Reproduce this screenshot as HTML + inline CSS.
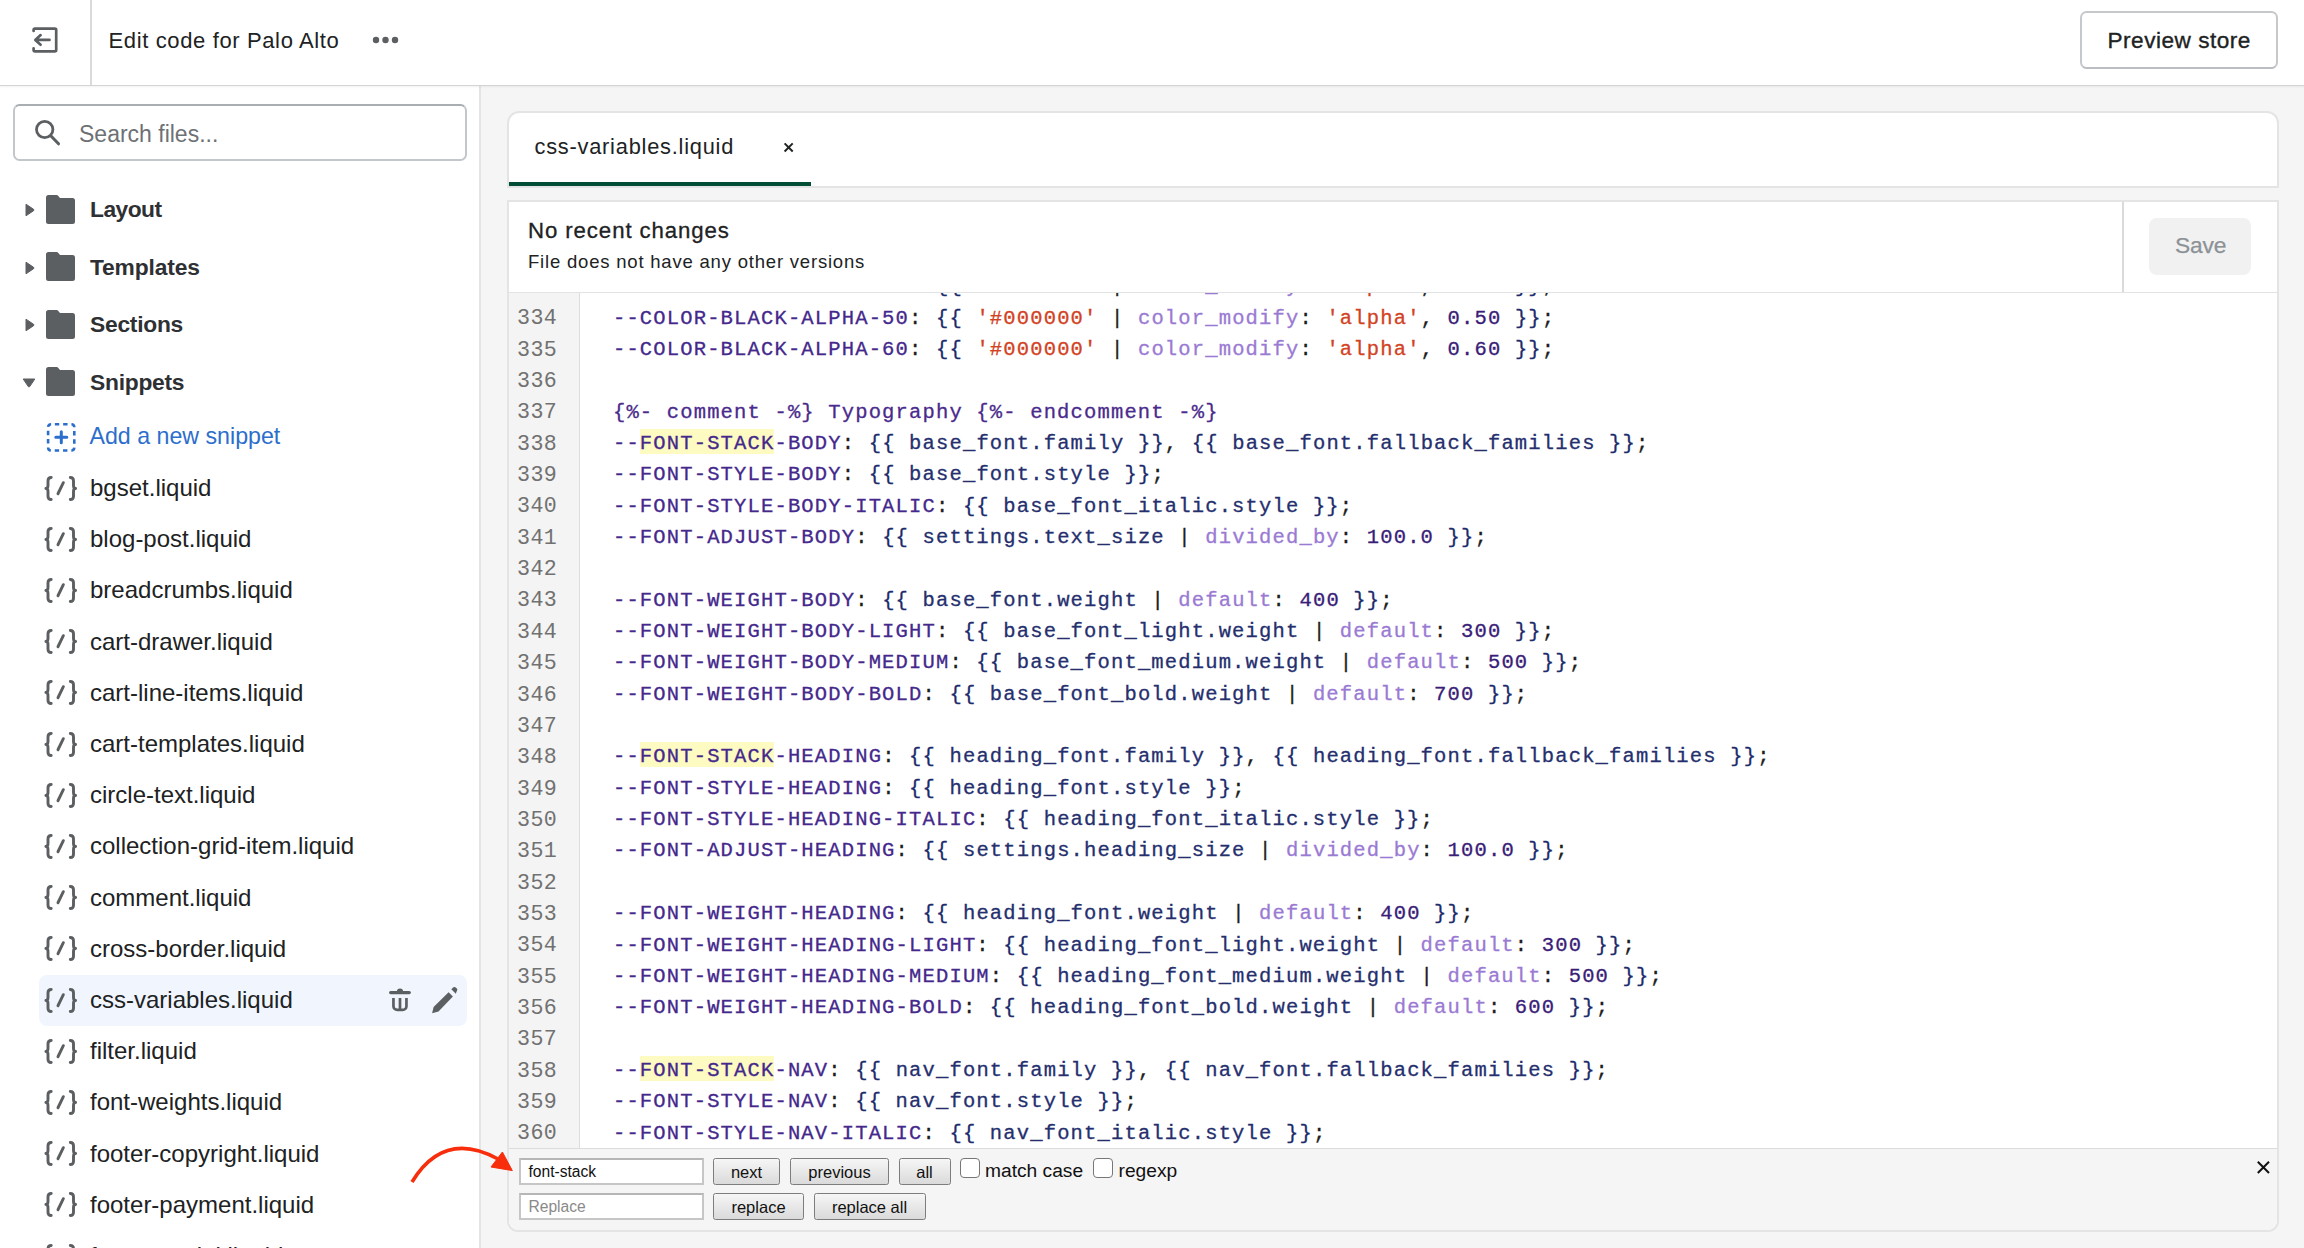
<!DOCTYPE html>
<html><head><meta charset="utf-8"><style>
*{box-sizing:border-box;margin:0;padding:0}
html,body{width:2304px;height:1248px;overflow:hidden;background:#f5f5f5;font-family:"Liberation Sans",sans-serif;color:#202223}
.abs{position:absolute}
.txt{white-space:pre;line-height:27px}
#hdr{position:absolute;left:0;top:0;width:2304px;height:86px;background:#fff;border-bottom:1.5px solid #d3d4d6;box-shadow:0 1px 2px rgba(0,0,0,0.06);z-index:2}
#side{position:absolute;left:0;top:86px;width:481px;height:1162px;background:#fff;border-right:2px solid #e3e4e5;overflow:hidden}

#main{position:absolute;left:481px;top:0;width:1823px;height:1248px}
.cl{position:absolute;left:0;height:31.35px;line-height:31.35px;white-space:pre;font-family:"Liberation Mono",monospace;font-size:20.5px;letter-spacing:1.158px;color:#1f2a6b;-webkit-text-stroke:0.3px currentColor}
.gl{position:absolute;right:22.2px;height:31.35px;line-height:31.35px;white-space:pre;font-family:"Liberation Mono",monospace;font-size:21.6px;letter-spacing:0.5px;color:#717171;text-align:right}
.tv{color:#44288c}.tvh{color:#44288c;padding-top:3.4px;background-image:linear-gradient(#fdfac2,#fdfac2);background-size:100% 25px;background-repeat:no-repeat}.tp{color:#1e1e1e}.tb{color:#1b2b6b}.ts{color:#d2421f}.tf{color:#9a7ad3}.tn{color:#3a1d78}.to{color:#252f6e}.tc{color:#4a2a8c}
.btn{position:absolute;height:27px;border:1.5px solid #7d7d7d;border-radius:2.5px;background:linear-gradient(#f6f6f6,#dadada);font-size:16.5px;line-height:27px;text-align:center;color:#111;white-space:pre}
.inp{position:absolute;height:27px;border:2px solid #c6c6c6;border-top-color:#b6b6b6;background:#fff;font-size:15.6px;line-height:23px;padding-left:7.5px;white-space:pre}
.cb{position:absolute;width:20px;height:20px;border:1.5px solid #777;border-radius:4px;background:#fff}
</style></head><body>
<div id="hdr"><svg class="abs" style="left:31px;top:26px" width="28" height="28" viewBox="0 0 28 28"><path d="M2.6 5 V4 a1.4 1.4 0 0 1 1.4 -1.4 H23.8 a1.4 1.4 0 0 1 1.4 1.4 V23.9 a1.4 1.4 0 0 1 -1.4 1.4 H4 a1.4 1.4 0 0 1 -1.4 -1.4 V22.3" fill="none" stroke="#5c5f62" stroke-width="2.7" stroke-linecap="round"/><path d="M18.5 13.9 H4.5 M9.6 9.1 L4.3 13.9 L9.6 18.7" fill="none" stroke="#5c5f62" stroke-width="2.7" stroke-linecap="round" stroke-linejoin="round"/></svg><div class="abs" style="left:90px;top:0;width:1.5px;height:85px;background:#d8dadd"></div><div class="abs txt" style="left:108.5px;top:27px;font-size:22px;letter-spacing:0.63px;color:#202223">Edit code for Palo Alto</div><svg class="abs" style="left:370px;top:33px" width="32" height="14" viewBox="0 0 32 14"><circle cx="6" cy="7" r="3.2" fill="#5c5f62"/><circle cx="15.5" cy="7" r="3.2" fill="#5c5f62"/><circle cx="25" cy="7" r="3.2" fill="#5c5f62"/></svg><div class="abs" style="left:2080px;top:11px;width:198px;height:58px;border:2px solid #c6c9cc;border-bottom-color:#babdc1;border-radius:6.5px;background:#fff"></div><div class="abs txt" style="left:2107.5px;top:26.8px;font-size:22.6px;letter-spacing:0.5px;color:#202223;-webkit-text-stroke:0.35px #202223">Preview store</div></div>
<div id="side"><div style="position:absolute;left:0;top:-86px;width:481px;height:1248px"><div class="abs" style="left:13px;top:104px;width:454px;height:57px;border:2px solid #c4c7ca;border-top-color:#a9aeb2;border-radius:6.5px;background:#fff"></div><svg class="abs" style="left:33px;top:118px" width="30" height="30" viewBox="0 0 30 30"><circle cx="11.7" cy="11.5" r="8.2" fill="none" stroke="#5c5f62" stroke-width="2.8"/><path d="M18 18 L25.5 25.8" stroke="#5c5f62" stroke-width="3" stroke-linecap="round"/></svg><div class="abs txt" style="left:79px;top:121px;font-size:23px;color:#6d7175">Search files...</div><div class="abs" style="left:25px;top:203.0px"><svg width="10" height="14" viewBox="0 0 10 14"><path d="M1 1.2 L8.6 6.3 a.9 .9 0 0 1 0 1.4 L1 12.8 Z" fill="#5c5f62" stroke="#5c5f62" stroke-width="1" stroke-linejoin="round"/></svg></div><div class="abs" style="left:46px;top:194.7px;height:29px"><svg width="29" height="29" viewBox="0 0 29 29"><path d="M2.5 0 H10.8 a1.5 1.5 0 0 1 1.1 .5 L14 3 H26.5 a2.5 2.5 0 0 1 2.5 2.5 V26.5 a2.5 2.5 0 0 1 -2.5 2.5 H2.5 a2.5 2.5 0 0 1 -2.5 -2.5 V2.5 a2.5 2.5 0 0 1 2.5 -2.5 Z" fill="#5c5f62"/></svg></div><div class="abs txt" style="left:90px;top:196.0px;font-size:22.8px;letter-spacing:-0.55px;font-weight:bold;color:#2e3033">Layout</div><div class="abs" style="left:25px;top:260.5px"><svg width="10" height="14" viewBox="0 0 10 14"><path d="M1 1.2 L8.6 6.3 a.9 .9 0 0 1 0 1.4 L1 12.8 Z" fill="#5c5f62" stroke="#5c5f62" stroke-width="1" stroke-linejoin="round"/></svg></div><div class="abs" style="left:46px;top:252.2px;height:29px"><svg width="29" height="29" viewBox="0 0 29 29"><path d="M2.5 0 H10.8 a1.5 1.5 0 0 1 1.1 .5 L14 3 H26.5 a2.5 2.5 0 0 1 2.5 2.5 V26.5 a2.5 2.5 0 0 1 -2.5 2.5 H2.5 a2.5 2.5 0 0 1 -2.5 -2.5 V2.5 a2.5 2.5 0 0 1 2.5 -2.5 Z" fill="#5c5f62"/></svg></div><div class="abs txt" style="left:90px;top:253.5px;font-size:22.8px;letter-spacing:-0.15px;font-weight:bold;color:#2e3033">Templates</div><div class="abs" style="left:25px;top:318.0px"><svg width="10" height="14" viewBox="0 0 10 14"><path d="M1 1.2 L8.6 6.3 a.9 .9 0 0 1 0 1.4 L1 12.8 Z" fill="#5c5f62" stroke="#5c5f62" stroke-width="1" stroke-linejoin="round"/></svg></div><div class="abs" style="left:46px;top:309.7px;height:29px"><svg width="29" height="29" viewBox="0 0 29 29"><path d="M2.5 0 H10.8 a1.5 1.5 0 0 1 1.1 .5 L14 3 H26.5 a2.5 2.5 0 0 1 2.5 2.5 V26.5 a2.5 2.5 0 0 1 -2.5 2.5 H2.5 a2.5 2.5 0 0 1 -2.5 -2.5 V2.5 a2.5 2.5 0 0 1 2.5 -2.5 Z" fill="#5c5f62"/></svg></div><div class="abs txt" style="left:90px;top:311.0px;font-size:22.8px;letter-spacing:-0.25px;font-weight:bold;color:#2e3033">Sections</div><div class="abs" style="left:22px;top:374.0px"><svg width="14" height="10" viewBox="0 0 14 10"><path d="M1.2 1 L12.8 1 L7.7 8.6 a.9 .9 0 0 1 -1.4 0 Z" fill="#5c5f62" stroke="#5c5f62" stroke-width="1" stroke-linejoin="round"/></svg></div><div class="abs" style="left:46px;top:367.2px;height:29px"><svg width="29" height="29" viewBox="0 0 29 29"><path d="M2.5 0 H10.8 a1.5 1.5 0 0 1 1.1 .5 L14 3 H26.5 a2.5 2.5 0 0 1 2.5 2.5 V26.5 a2.5 2.5 0 0 1 -2.5 2.5 H2.5 a2.5 2.5 0 0 1 -2.5 -2.5 V2.5 a2.5 2.5 0 0 1 2.5 -2.5 Z" fill="#5c5f62"/></svg></div><div class="abs txt" style="left:90px;top:368.5px;font-size:22.8px;letter-spacing:-0.25px;font-weight:bold;color:#2e3033">Snippets</div><div class="abs" style="left:45.5px;top:421.5px"><svg width="30" height="30" viewBox="0 0 30 30"><rect x="2.1" y="2.2" width="26.2" height="26.3" rx="3" fill="none" stroke="#2c6ecb" stroke-width="2.6" stroke-dasharray="4.4 3.9" stroke-dashoffset="4.54"/><path d="M15.3 9.7 V20.7 M9.8 15.2 H20.8" stroke="#2c6ecb" stroke-width="3" stroke-linecap="round"/></svg></div><div class="abs txt" style="left:89.5px;top:423px;font-size:23.2px;color:#2c6ecb">Add a new snippet</div><div class="abs" style="left:44px;top:475.5px"><svg width="34" height="26" viewBox="0 0 34 26"><g fill="none" stroke="#5c5f62" stroke-width="2.9" stroke-linecap="round" stroke-linejoin="round"><path d="M7.2 1.5 C5 1.5 4 2.5 4 4.8 V9.6 C4 11.3 3.3 12.5 1.9 12.5 C3.3 12.5 4 13.7 4 15.4 V20.2 C4 22.5 5 23.5 7.2 23.5"/><path d="M26.3 1.5 C28.5 1.5 29.5 2.5 29.5 4.8 V9.6 C29.5 11.3 30.2 12.5 31.6 12.5 C30.2 12.5 29.5 13.7 29.5 15.4 V20.2 C29.5 22.5 28.5 23.5 26.3 23.5"/><path d="M13.95 17.75 L19.35 6.65"/></g></svg></div><div class="abs txt" style="left:90px;top:474.0px;font-size:24px;color:#202223">bgset.liquid</div><div class="abs" style="left:44px;top:526.7px"><svg width="34" height="26" viewBox="0 0 34 26"><g fill="none" stroke="#5c5f62" stroke-width="2.9" stroke-linecap="round" stroke-linejoin="round"><path d="M7.2 1.5 C5 1.5 4 2.5 4 4.8 V9.6 C4 11.3 3.3 12.5 1.9 12.5 C3.3 12.5 4 13.7 4 15.4 V20.2 C4 22.5 5 23.5 7.2 23.5"/><path d="M26.3 1.5 C28.5 1.5 29.5 2.5 29.5 4.8 V9.6 C29.5 11.3 30.2 12.5 31.6 12.5 C30.2 12.5 29.5 13.7 29.5 15.4 V20.2 C29.5 22.5 28.5 23.5 26.3 23.5"/><path d="M13.95 17.75 L19.35 6.65"/></g></svg></div><div class="abs txt" style="left:90px;top:525.2px;font-size:24px;color:#202223">blog-post.liquid</div><div class="abs" style="left:44px;top:577.9px"><svg width="34" height="26" viewBox="0 0 34 26"><g fill="none" stroke="#5c5f62" stroke-width="2.9" stroke-linecap="round" stroke-linejoin="round"><path d="M7.2 1.5 C5 1.5 4 2.5 4 4.8 V9.6 C4 11.3 3.3 12.5 1.9 12.5 C3.3 12.5 4 13.7 4 15.4 V20.2 C4 22.5 5 23.5 7.2 23.5"/><path d="M26.3 1.5 C28.5 1.5 29.5 2.5 29.5 4.8 V9.6 C29.5 11.3 30.2 12.5 31.6 12.5 C30.2 12.5 29.5 13.7 29.5 15.4 V20.2 C29.5 22.5 28.5 23.5 26.3 23.5"/><path d="M13.95 17.75 L19.35 6.65"/></g></svg></div><div class="abs txt" style="left:90px;top:576.4px;font-size:24px;color:#202223">breadcrumbs.liquid</div><div class="abs" style="left:44px;top:629.1px"><svg width="34" height="26" viewBox="0 0 34 26"><g fill="none" stroke="#5c5f62" stroke-width="2.9" stroke-linecap="round" stroke-linejoin="round"><path d="M7.2 1.5 C5 1.5 4 2.5 4 4.8 V9.6 C4 11.3 3.3 12.5 1.9 12.5 C3.3 12.5 4 13.7 4 15.4 V20.2 C4 22.5 5 23.5 7.2 23.5"/><path d="M26.3 1.5 C28.5 1.5 29.5 2.5 29.5 4.8 V9.6 C29.5 11.3 30.2 12.5 31.6 12.5 C30.2 12.5 29.5 13.7 29.5 15.4 V20.2 C29.5 22.5 28.5 23.5 26.3 23.5"/><path d="M13.95 17.75 L19.35 6.65"/></g></svg></div><div class="abs txt" style="left:90px;top:627.6px;font-size:24px;color:#202223">cart-drawer.liquid</div><div class="abs" style="left:44px;top:680.3px"><svg width="34" height="26" viewBox="0 0 34 26"><g fill="none" stroke="#5c5f62" stroke-width="2.9" stroke-linecap="round" stroke-linejoin="round"><path d="M7.2 1.5 C5 1.5 4 2.5 4 4.8 V9.6 C4 11.3 3.3 12.5 1.9 12.5 C3.3 12.5 4 13.7 4 15.4 V20.2 C4 22.5 5 23.5 7.2 23.5"/><path d="M26.3 1.5 C28.5 1.5 29.5 2.5 29.5 4.8 V9.6 C29.5 11.3 30.2 12.5 31.6 12.5 C30.2 12.5 29.5 13.7 29.5 15.4 V20.2 C29.5 22.5 28.5 23.5 26.3 23.5"/><path d="M13.95 17.75 L19.35 6.65"/></g></svg></div><div class="abs txt" style="left:90px;top:678.8px;font-size:24px;color:#202223">cart-line-items.liquid</div><div class="abs" style="left:44px;top:731.5px"><svg width="34" height="26" viewBox="0 0 34 26"><g fill="none" stroke="#5c5f62" stroke-width="2.9" stroke-linecap="round" stroke-linejoin="round"><path d="M7.2 1.5 C5 1.5 4 2.5 4 4.8 V9.6 C4 11.3 3.3 12.5 1.9 12.5 C3.3 12.5 4 13.7 4 15.4 V20.2 C4 22.5 5 23.5 7.2 23.5"/><path d="M26.3 1.5 C28.5 1.5 29.5 2.5 29.5 4.8 V9.6 C29.5 11.3 30.2 12.5 31.6 12.5 C30.2 12.5 29.5 13.7 29.5 15.4 V20.2 C29.5 22.5 28.5 23.5 26.3 23.5"/><path d="M13.95 17.75 L19.35 6.65"/></g></svg></div><div class="abs txt" style="left:90px;top:730.0px;font-size:24px;color:#202223">cart-templates.liquid</div><div class="abs" style="left:44px;top:782.7px"><svg width="34" height="26" viewBox="0 0 34 26"><g fill="none" stroke="#5c5f62" stroke-width="2.9" stroke-linecap="round" stroke-linejoin="round"><path d="M7.2 1.5 C5 1.5 4 2.5 4 4.8 V9.6 C4 11.3 3.3 12.5 1.9 12.5 C3.3 12.5 4 13.7 4 15.4 V20.2 C4 22.5 5 23.5 7.2 23.5"/><path d="M26.3 1.5 C28.5 1.5 29.5 2.5 29.5 4.8 V9.6 C29.5 11.3 30.2 12.5 31.6 12.5 C30.2 12.5 29.5 13.7 29.5 15.4 V20.2 C29.5 22.5 28.5 23.5 26.3 23.5"/><path d="M13.95 17.75 L19.35 6.65"/></g></svg></div><div class="abs txt" style="left:90px;top:781.2px;font-size:24px;color:#202223">circle-text.liquid</div><div class="abs" style="left:44px;top:833.9px"><svg width="34" height="26" viewBox="0 0 34 26"><g fill="none" stroke="#5c5f62" stroke-width="2.9" stroke-linecap="round" stroke-linejoin="round"><path d="M7.2 1.5 C5 1.5 4 2.5 4 4.8 V9.6 C4 11.3 3.3 12.5 1.9 12.5 C3.3 12.5 4 13.7 4 15.4 V20.2 C4 22.5 5 23.5 7.2 23.5"/><path d="M26.3 1.5 C28.5 1.5 29.5 2.5 29.5 4.8 V9.6 C29.5 11.3 30.2 12.5 31.6 12.5 C30.2 12.5 29.5 13.7 29.5 15.4 V20.2 C29.5 22.5 28.5 23.5 26.3 23.5"/><path d="M13.95 17.75 L19.35 6.65"/></g></svg></div><div class="abs txt" style="left:90px;top:832.4px;font-size:24px;color:#202223">collection-grid-item.liquid</div><div class="abs" style="left:44px;top:885.1px"><svg width="34" height="26" viewBox="0 0 34 26"><g fill="none" stroke="#5c5f62" stroke-width="2.9" stroke-linecap="round" stroke-linejoin="round"><path d="M7.2 1.5 C5 1.5 4 2.5 4 4.8 V9.6 C4 11.3 3.3 12.5 1.9 12.5 C3.3 12.5 4 13.7 4 15.4 V20.2 C4 22.5 5 23.5 7.2 23.5"/><path d="M26.3 1.5 C28.5 1.5 29.5 2.5 29.5 4.8 V9.6 C29.5 11.3 30.2 12.5 31.6 12.5 C30.2 12.5 29.5 13.7 29.5 15.4 V20.2 C29.5 22.5 28.5 23.5 26.3 23.5"/><path d="M13.95 17.75 L19.35 6.65"/></g></svg></div><div class="abs txt" style="left:90px;top:883.6px;font-size:24px;color:#202223">comment.liquid</div><div class="abs" style="left:44px;top:936.3px"><svg width="34" height="26" viewBox="0 0 34 26"><g fill="none" stroke="#5c5f62" stroke-width="2.9" stroke-linecap="round" stroke-linejoin="round"><path d="M7.2 1.5 C5 1.5 4 2.5 4 4.8 V9.6 C4 11.3 3.3 12.5 1.9 12.5 C3.3 12.5 4 13.7 4 15.4 V20.2 C4 22.5 5 23.5 7.2 23.5"/><path d="M26.3 1.5 C28.5 1.5 29.5 2.5 29.5 4.8 V9.6 C29.5 11.3 30.2 12.5 31.6 12.5 C30.2 12.5 29.5 13.7 29.5 15.4 V20.2 C29.5 22.5 28.5 23.5 26.3 23.5"/><path d="M13.95 17.75 L19.35 6.65"/></g></svg></div><div class="abs txt" style="left:90px;top:934.8px;font-size:24px;color:#202223">cross-border.liquid</div><div class="abs" style="left:38.5px;top:974.9px;width:428px;height:50.7px;background:#f1f6fe;border-radius:8px"></div><svg class="abs" style="left:386px;top:985.0px" width="30" height="30" viewBox="0 0 30 30"><path d="M4.65 7.6 H23.25" stroke="#5c5f62" stroke-width="3.3" stroke-linecap="round"/><path d="M10.9 6.6 a3.1 3.1 0 0 1 6.2 0 Z" fill="#5c5f62"/><path d="M7.45 12.9 V21.2 a3.75 3.75 0 0 0 3.75 3.75 H16.7 a3.75 3.75 0 0 0 3.75 -3.75 V12.9 M14 12.9 V24" fill="none" stroke="#5c5f62" stroke-width="2.7"/></svg><svg class="abs" style="left:430px;top:985.0px" width="30" height="30" viewBox="0 0 30 30"><path d="M2.1 28.3 L3.6 21.9 L18.6 7.3 L22.9 11.6 L8.5 26.5 Z" fill="#5c5f62"/><path d="M21.3 4.2 L22.6 2.9 a2.6 2.6 0 0 1 3.7 0 l0.2 0.2 a2.6 2.6 0 0 1 0 3.7 L25.8 8.7 Z" fill="#5c5f62"/></svg><div class="abs" style="left:44px;top:987.5px"><svg width="34" height="26" viewBox="0 0 34 26"><g fill="none" stroke="#5c5f62" stroke-width="2.9" stroke-linecap="round" stroke-linejoin="round"><path d="M7.2 1.5 C5 1.5 4 2.5 4 4.8 V9.6 C4 11.3 3.3 12.5 1.9 12.5 C3.3 12.5 4 13.7 4 15.4 V20.2 C4 22.5 5 23.5 7.2 23.5"/><path d="M26.3 1.5 C28.5 1.5 29.5 2.5 29.5 4.8 V9.6 C29.5 11.3 30.2 12.5 31.6 12.5 C30.2 12.5 29.5 13.7 29.5 15.4 V20.2 C29.5 22.5 28.5 23.5 26.3 23.5"/><path d="M13.95 17.75 L19.35 6.65"/></g></svg></div><div class="abs txt" style="left:90px;top:986.0px;font-size:24px;color:#202223">css-variables.liquid</div><div class="abs" style="left:44px;top:1038.7px"><svg width="34" height="26" viewBox="0 0 34 26"><g fill="none" stroke="#5c5f62" stroke-width="2.9" stroke-linecap="round" stroke-linejoin="round"><path d="M7.2 1.5 C5 1.5 4 2.5 4 4.8 V9.6 C4 11.3 3.3 12.5 1.9 12.5 C3.3 12.5 4 13.7 4 15.4 V20.2 C4 22.5 5 23.5 7.2 23.5"/><path d="M26.3 1.5 C28.5 1.5 29.5 2.5 29.5 4.8 V9.6 C29.5 11.3 30.2 12.5 31.6 12.5 C30.2 12.5 29.5 13.7 29.5 15.4 V20.2 C29.5 22.5 28.5 23.5 26.3 23.5"/><path d="M13.95 17.75 L19.35 6.65"/></g></svg></div><div class="abs txt" style="left:90px;top:1037.2px;font-size:24px;color:#202223">filter.liquid</div><div class="abs" style="left:44px;top:1089.9px"><svg width="34" height="26" viewBox="0 0 34 26"><g fill="none" stroke="#5c5f62" stroke-width="2.9" stroke-linecap="round" stroke-linejoin="round"><path d="M7.2 1.5 C5 1.5 4 2.5 4 4.8 V9.6 C4 11.3 3.3 12.5 1.9 12.5 C3.3 12.5 4 13.7 4 15.4 V20.2 C4 22.5 5 23.5 7.2 23.5"/><path d="M26.3 1.5 C28.5 1.5 29.5 2.5 29.5 4.8 V9.6 C29.5 11.3 30.2 12.5 31.6 12.5 C30.2 12.5 29.5 13.7 29.5 15.4 V20.2 C29.5 22.5 28.5 23.5 26.3 23.5"/><path d="M13.95 17.75 L19.35 6.65"/></g></svg></div><div class="abs txt" style="left:90px;top:1088.4px;font-size:24px;color:#202223">font-weights.liquid</div><div class="abs" style="left:44px;top:1141.1px"><svg width="34" height="26" viewBox="0 0 34 26"><g fill="none" stroke="#5c5f62" stroke-width="2.9" stroke-linecap="round" stroke-linejoin="round"><path d="M7.2 1.5 C5 1.5 4 2.5 4 4.8 V9.6 C4 11.3 3.3 12.5 1.9 12.5 C3.3 12.5 4 13.7 4 15.4 V20.2 C4 22.5 5 23.5 7.2 23.5"/><path d="M26.3 1.5 C28.5 1.5 29.5 2.5 29.5 4.8 V9.6 C29.5 11.3 30.2 12.5 31.6 12.5 C30.2 12.5 29.5 13.7 29.5 15.4 V20.2 C29.5 22.5 28.5 23.5 26.3 23.5"/><path d="M13.95 17.75 L19.35 6.65"/></g></svg></div><div class="abs txt" style="left:90px;top:1139.6px;font-size:24px;color:#202223">footer-copyright.liquid</div><div class="abs" style="left:44px;top:1192.3px"><svg width="34" height="26" viewBox="0 0 34 26"><g fill="none" stroke="#5c5f62" stroke-width="2.9" stroke-linecap="round" stroke-linejoin="round"><path d="M7.2 1.5 C5 1.5 4 2.5 4 4.8 V9.6 C4 11.3 3.3 12.5 1.9 12.5 C3.3 12.5 4 13.7 4 15.4 V20.2 C4 22.5 5 23.5 7.2 23.5"/><path d="M26.3 1.5 C28.5 1.5 29.5 2.5 29.5 4.8 V9.6 C29.5 11.3 30.2 12.5 31.6 12.5 C30.2 12.5 29.5 13.7 29.5 15.4 V20.2 C29.5 22.5 28.5 23.5 26.3 23.5"/><path d="M13.95 17.75 L19.35 6.65"/></g></svg></div><div class="abs txt" style="left:90px;top:1190.8px;font-size:24px;color:#202223">footer-payment.liquid</div><div class="abs" style="left:44px;top:1243.5px"><svg width="34" height="26" viewBox="0 0 34 26"><g fill="none" stroke="#5c5f62" stroke-width="2.9" stroke-linecap="round" stroke-linejoin="round"><path d="M7.2 1.5 C5 1.5 4 2.5 4 4.8 V9.6 C4 11.3 3.3 12.5 1.9 12.5 C3.3 12.5 4 13.7 4 15.4 V20.2 C4 22.5 5 23.5 7.2 23.5"/><path d="M26.3 1.5 C28.5 1.5 29.5 2.5 29.5 4.8 V9.6 C29.5 11.3 30.2 12.5 31.6 12.5 C30.2 12.5 29.5 13.7 29.5 15.4 V20.2 C29.5 22.5 28.5 23.5 26.3 23.5"/><path d="M13.95 17.75 L19.35 6.65"/></g></svg></div><div class="abs txt" style="left:90px;top:1242.0px;font-size:24px;color:#202223">footer-social.liquid</div></div></div>
<div id="main"><div style="position:absolute;left:0;top:0;width:1823px;height:1248px"><div class="abs" style="left:26px;top:111px;width:1772px;height:77px;background:#fff;border:2px solid #e4e4e5;border-radius:12px 12px 0 0"></div><div class="abs txt" style="left:53.5px;top:133px;font-size:21.8px;letter-spacing:0.77px;color:#202223">css-variables.liquid</div><svg class="abs" style="left:300px;top:139.5px" width="14" height="14" viewBox="0 0 14 14"><path d="M3.6 3.4 L11.7 11.5 M11.7 3.4 L3.6 11.5" stroke="#202223" stroke-width="2" stroke-linecap="butt"/></svg><div class="abs" style="left:28px;top:182px;width:302px;height:4px;background:#024d36"></div><div class="abs" style="left:26px;top:200px;width:1772px;height:1032px;background:#fff;border:2px solid #e4e4e5;border-radius:0 0 11px 11px;overflow:hidden"><div class="abs" style="left:0;top:89.5px;width:1770px;height:1.5px;background:#e1e3e5"></div><div class="abs" style="left:1613px;top:0;width:1.5px;height:90px;background:#d8dadd"></div><div class="abs" style="left:1640px;top:16px;width:102px;height:57px;background:#f1f1f1;border-radius:8px"></div><div class="abs txt" style="left:1666px;top:30px;font-size:22.8px;letter-spacing:-0.2px;color:#8c9196;-webkit-text-stroke:0.25px #8c9196">Save</div><div class="abs txt" style="left:19px;top:15px;font-size:22.2px;letter-spacing:0.92px;color:#202223;-webkit-text-stroke:0.3px #202223">No recent changes</div><div class="abs txt" style="left:19px;top:46px;font-size:18.5px;letter-spacing:0.8px;color:#202223">File does not have any other versions</div></div><div class="abs" style="left:28px;top:293px;width:1768px;height:855px;overflow:hidden;background:#fff"><div class="abs" style="left:0;top:0;width:71px;height:855px;background:#f4f4f4;border-right:1.5px solid #dddddd"></div><div class="abs" style="left:0;top:0;width:70.5px;height:855px"><div class="gl" style="top:-21.03px">333</div><div class="gl" style="top:10.32px">334</div><div class="gl" style="top:41.67px">335</div><div class="gl" style="top:73.02px">336</div><div class="gl" style="top:104.37px">337</div><div class="gl" style="top:135.72px">338</div><div class="gl" style="top:167.07px">339</div><div class="gl" style="top:198.42px">340</div><div class="gl" style="top:229.78px">341</div><div class="gl" style="top:261.13px">342</div><div class="gl" style="top:292.47px">343</div><div class="gl" style="top:323.83px">344</div><div class="gl" style="top:355.18px">345</div><div class="gl" style="top:386.53px">346</div><div class="gl" style="top:417.88px">347</div><div class="gl" style="top:449.22px">348</div><div class="gl" style="top:480.58px">349</div><div class="gl" style="top:511.93px">350</div><div class="gl" style="top:543.28px">351</div><div class="gl" style="top:574.62px">352</div><div class="gl" style="top:605.97px">353</div><div class="gl" style="top:637.33px">354</div><div class="gl" style="top:668.67px">355</div><div class="gl" style="top:700.03px">356</div><div class="gl" style="top:731.38px">357</div><div class="gl" style="top:762.72px">358</div><div class="gl" style="top:794.08px">359</div><div class="gl" style="top:825.42px">360</div><div class="gl" style="top:856.78px">361</div></div><div class="abs" style="left:77px;top:0;width:1680px;height:855px"><div class="cl" style="top:-21.83px"><span class="tv">  --COLOR-BLACK-ALPHA-40</span><span class="tp">:</span> <span class="tb">{{</span> <span class="ts">'#000000'</span> <span class="tp">|</span> <span class="tf">color_modify</span><span class="tp">:</span> <span class="ts">'alpha'</span><span class="tp">,</span> <span class="tn">0.40</span> <span class="tb">}}</span><span class="tp">;</span></div><div class="cl" style="top:9.52px"><span class="tv">  --COLOR-BLACK-ALPHA-50</span><span class="tp">:</span> <span class="tb">{{</span> <span class="ts">'#000000'</span> <span class="tp">|</span> <span class="tf">color_modify</span><span class="tp">:</span> <span class="ts">'alpha'</span><span class="tp">,</span> <span class="tn">0.50</span> <span class="tb">}}</span><span class="tp">;</span></div><div class="cl" style="top:40.87px"><span class="tv">  --COLOR-BLACK-ALPHA-60</span><span class="tp">:</span> <span class="tb">{{</span> <span class="ts">'#000000'</span> <span class="tp">|</span> <span class="tf">color_modify</span><span class="tp">:</span> <span class="ts">'alpha'</span><span class="tp">,</span> <span class="tn">0.60</span> <span class="tb">}}</span><span class="tp">;</span></div><div class="cl" style="top:72.22px">&nbsp;</div><div class="cl" style="top:103.57px"><span class="tc">  {%- comment -%} Typography {%- endcomment -%}</span></div><div class="cl" style="top:134.92px"><span class="tv">  --</span><span class="tvh">FONT-STACK</span><span class="tv">-BODY</span><span class="tp">:</span> <span class="tb">{{</span> <span class="to">base_font.family</span> <span class="tb">}}</span><span class="tp">,</span> <span class="tb">{{</span> <span class="to">base_font.fallback_families</span> <span class="tb">}}</span><span class="tp">;</span></div><div class="cl" style="top:166.27px"><span class="tv">  --FONT-STYLE-BODY</span><span class="tp">:</span> <span class="tb">{{</span> <span class="to">base_font.style</span> <span class="tb">}}</span><span class="tp">;</span></div><div class="cl" style="top:197.62px"><span class="tv">  --FONT-STYLE-BODY-ITALIC</span><span class="tp">:</span> <span class="tb">{{</span> <span class="to">base_font_italic.style</span> <span class="tb">}}</span><span class="tp">;</span></div><div class="cl" style="top:228.98px"><span class="tv">  --FONT-ADJUST-BODY</span><span class="tp">:</span> <span class="tb">{{</span> <span class="to">settings.text_size</span> <span class="tp">|</span> <span class="tf">divided_by</span><span class="tp">:</span> <span class="tn">100.0</span> <span class="tb">}}</span><span class="tp">;</span></div><div class="cl" style="top:260.33px">&nbsp;</div><div class="cl" style="top:291.67px"><span class="tv">  --FONT-WEIGHT-BODY</span><span class="tp">:</span> <span class="tb">{{</span> <span class="to">base_font.weight</span> <span class="tp">|</span> <span class="tf">default</span><span class="tp">:</span> <span class="tn">400</span> <span class="tb">}}</span><span class="tp">;</span></div><div class="cl" style="top:323.03px"><span class="tv">  --FONT-WEIGHT-BODY-LIGHT</span><span class="tp">:</span> <span class="tb">{{</span> <span class="to">base_font_light.weight</span> <span class="tp">|</span> <span class="tf">default</span><span class="tp">:</span> <span class="tn">300</span> <span class="tb">}}</span><span class="tp">;</span></div><div class="cl" style="top:354.38px"><span class="tv">  --FONT-WEIGHT-BODY-MEDIUM</span><span class="tp">:</span> <span class="tb">{{</span> <span class="to">base_font_medium.weight</span> <span class="tp">|</span> <span class="tf">default</span><span class="tp">:</span> <span class="tn">500</span> <span class="tb">}}</span><span class="tp">;</span></div><div class="cl" style="top:385.73px"><span class="tv">  --FONT-WEIGHT-BODY-BOLD</span><span class="tp">:</span> <span class="tb">{{</span> <span class="to">base_font_bold.weight</span> <span class="tp">|</span> <span class="tf">default</span><span class="tp">:</span> <span class="tn">700</span> <span class="tb">}}</span><span class="tp">;</span></div><div class="cl" style="top:417.08px">&nbsp;</div><div class="cl" style="top:448.42px"><span class="tv">  --</span><span class="tvh">FONT-STACK</span><span class="tv">-HEADING</span><span class="tp">:</span> <span class="tb">{{</span> <span class="to">heading_font.family</span> <span class="tb">}}</span><span class="tp">,</span> <span class="tb">{{</span> <span class="to">heading_font.fallback_families</span> <span class="tb">}}</span><span class="tp">;</span></div><div class="cl" style="top:479.78px"><span class="tv">  --FONT-STYLE-HEADING</span><span class="tp">:</span> <span class="tb">{{</span> <span class="to">heading_font.style</span> <span class="tb">}}</span><span class="tp">;</span></div><div class="cl" style="top:511.12px"><span class="tv">  --FONT-STYLE-HEADING-ITALIC</span><span class="tp">:</span> <span class="tb">{{</span> <span class="to">heading_font_italic.style</span> <span class="tb">}}</span><span class="tp">;</span></div><div class="cl" style="top:542.48px"><span class="tv">  --FONT-ADJUST-HEADING</span><span class="tp">:</span> <span class="tb">{{</span> <span class="to">settings.heading_size</span> <span class="tp">|</span> <span class="tf">divided_by</span><span class="tp">:</span> <span class="tn">100.0</span> <span class="tb">}}</span><span class="tp">;</span></div><div class="cl" style="top:573.83px">&nbsp;</div><div class="cl" style="top:605.17px"><span class="tv">  --FONT-WEIGHT-HEADING</span><span class="tp">:</span> <span class="tb">{{</span> <span class="to">heading_font.weight</span> <span class="tp">|</span> <span class="tf">default</span><span class="tp">:</span> <span class="tn">400</span> <span class="tb">}}</span><span class="tp">;</span></div><div class="cl" style="top:636.53px"><span class="tv">  --FONT-WEIGHT-HEADING-LIGHT</span><span class="tp">:</span> <span class="tb">{{</span> <span class="to">heading_font_light.weight</span> <span class="tp">|</span> <span class="tf">default</span><span class="tp">:</span> <span class="tn">300</span> <span class="tb">}}</span><span class="tp">;</span></div><div class="cl" style="top:667.88px"><span class="tv">  --FONT-WEIGHT-HEADING-MEDIUM</span><span class="tp">:</span> <span class="tb">{{</span> <span class="to">heading_font_medium.weight</span> <span class="tp">|</span> <span class="tf">default</span><span class="tp">:</span> <span class="tn">500</span> <span class="tb">}}</span><span class="tp">;</span></div><div class="cl" style="top:699.23px"><span class="tv">  --FONT-WEIGHT-HEADING-BOLD</span><span class="tp">:</span> <span class="tb">{{</span> <span class="to">heading_font_bold.weight</span> <span class="tp">|</span> <span class="tf">default</span><span class="tp">:</span> <span class="tn">600</span> <span class="tb">}}</span><span class="tp">;</span></div><div class="cl" style="top:730.58px">&nbsp;</div><div class="cl" style="top:761.92px"><span class="tv">  --</span><span class="tvh">FONT-STACK</span><span class="tv">-NAV</span><span class="tp">:</span> <span class="tb">{{</span> <span class="to">nav_font.family</span> <span class="tb">}}</span><span class="tp">,</span> <span class="tb">{{</span> <span class="to">nav_font.fallback_families</span> <span class="tb">}}</span><span class="tp">;</span></div><div class="cl" style="top:793.28px"><span class="tv">  --FONT-STYLE-NAV</span><span class="tp">:</span> <span class="tb">{{</span> <span class="to">nav_font.style</span> <span class="tb">}}</span><span class="tp">;</span></div><div class="cl" style="top:824.62px"><span class="tv">  --FONT-STYLE-NAV-ITALIC</span><span class="tp">:</span> <span class="tb">{{</span> <span class="to">nav_font_italic.style</span> <span class="tb">}}</span><span class="tp">;</span></div><div class="cl" style="top:855.98px"><span class="tv">  --FONT-ADJUST-NAV</span><span class="tp">:</span> <span class="tb">{{</span> <span class="to">settings.nav_size</span> <span class="tp">|</span> <span class="tf">divided_by</span><span class="tp">:</span> <span class="tn">100.0</span> <span class="tb">}}</span><span class="tp">;</span></div></div></div><div class="abs" style="left:28px;top:1148px;width:1768px;height:82px;background:#f5f5f5;border-top:1.5px solid #dcdcdc;border-radius:0 0 10px 10px"></div><div class="inp" style="left:38px;top:1158px;width:185px;color:#111">font-stack</div><div class="inp" style="left:38px;top:1193px;width:185px;color:#8a8a8a">Replace</div><div class="btn" style="left:232px;top:1158px;width:67px">next</div><div class="btn" style="left:309px;top:1158px;width:99px">previous</div><div class="btn" style="left:417.5px;top:1158px;width:52px">all</div><div class="cb" style="left:478.5px;top:1157.5px"></div><div class="abs txt" style="left:504px;top:1159px;font-size:19.2px;line-height:24px;color:#111">match case</div><div class="cb" style="left:612px;top:1157.5px"></div><div class="abs txt" style="left:637.5px;top:1159px;font-size:19.2px;line-height:24px;color:#111">regexp</div><div class="btn" style="left:232px;top:1193px;width:91px">replace</div><div class="btn" style="left:332.5px;top:1193px;width:112px">replace all</div><svg class="abs" style="left:1775px;top:1160px" width="15" height="15" viewBox="0 0 15 15"><path d="M1.8 1.8 L13 13 M13 1.8 L1.8 13" stroke="#111" stroke-width="2" /></svg></div></div>
<svg class="abs" style="left:0;top:0;z-index:5" width="2304" height="1248"><path d="M412 1182 Q444 1129.5 498 1159" fill="none" stroke="#f72d0c" stroke-width="3.6"/><path d="M502.4 1152 L491 1167 L512.3 1170.6 Z" fill="#f72d0c" stroke="#f72d0c" stroke-width="1" stroke-linejoin="round"/></svg>
</body></html>
